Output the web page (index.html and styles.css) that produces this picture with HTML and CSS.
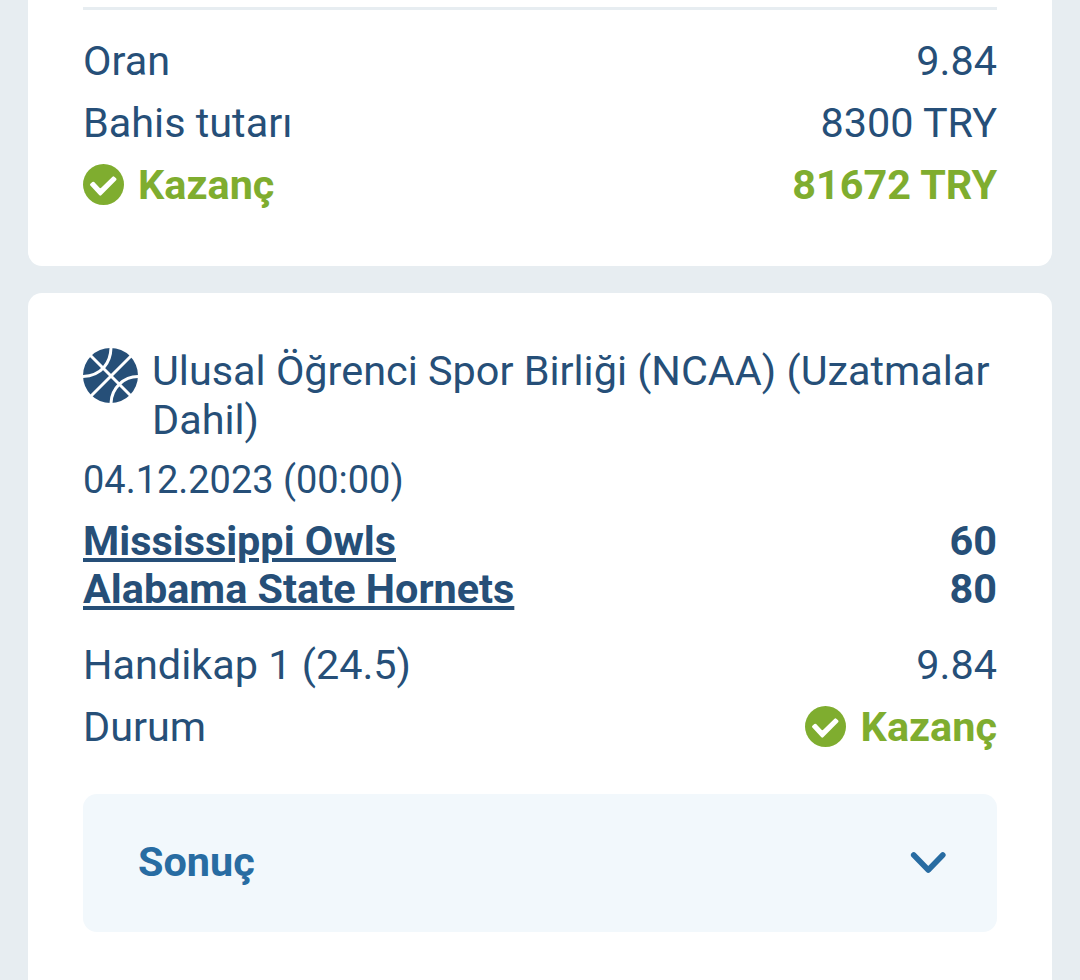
FILE: index.html
```html
<!DOCTYPE html>
<html lang="tr">
<head>
<meta charset="utf-8">
<title>Kupon</title>
<link rel="stylesheet" href="styles.css">
</head>
<body>
<section class="card summary">
  <div class="row"><span>Oran</span><span>9.84</span></div>
  <div class="row"><span>Bahis tutarı</span><span>8300 TRY</span></div>
  <div class="row win">
    <span class="status"><svg class="check" viewBox="0 0 41 41"><circle cx="20.5" cy="20.5" r="20.5"/><path d="M8.3 20.7l1.9-1.7 7.1 7.4L30.4 13.6l1.8 1.7L17.3 30.3z"/></svg>Kazanç</span>
    <span>81672 TRY</span>
  </div>
</section>
<section class="card event">
  <div class="league">
    <svg class="ball" viewBox="0 0 55 55"><circle cx="27.5" cy="27.5" r="27.5"/><path d="M7 7L49 49M49 7L7 49M28 -1C28 14 19 28 -1 28.5M56 28.5C41 28 28 40 28 56"/></svg>
    <span>Ulusal Öğrenci Spor Birliği (NCAA) (Uzatmalar Dahil)</span>
  </div>
  <div class="date">04.12.2023 (00:00)</div>
  <div class="team first"><a>Mississippi Owls</a><span>60</span></div>
  <div class="team"><a>Alabama State Hornets</a><span>80</span></div>
  <div class="row market"><span>Handikap 1 (24.5)</span><span>9.84</span></div>
  <div class="row"><span>Durum</span>
    <span class="status outcome win"><svg class="check" viewBox="0 0 41 41"><circle cx="20.5" cy="20.5" r="20.5"/><path d="M8.3 20.7l1.9-1.7 7.1 7.4L30.4 13.6l1.8 1.7L17.3 30.3z"/></svg>Kazanç</span>
  </div>
  <div class="result"><span>Sonuç</span><svg class="chevron" viewBox="0 0 36 24"><path d="M3.7 4l14.6 15L32.8 4"/></svg></div>
</section>
</body>
</html>
```
FILE: styles.css
```css
* { box-sizing: border-box; }
body {
  margin: 0;
  height: 980px;
  overflow: hidden;
  padding: 0 28px;
  background: #e7edf1;
  color: #264f78;
  font: 400 41.38px/48px Roboto, sans-serif;
}
.card { background: #fff; padding: 0 55px; }
.summary { height: 266px; padding-top: 7px; border-radius: 0 0 14px 14px; }
.summary::before { content: ""; display: block; height: 3px; margin-bottom: 20px; background: #e7edf1; }
.event { height: 720px; margin-top: 27px; padding-top: 54px; border-radius: 14px 14px 0 0; }
.row { display: flex; justify-content: space-between; height: 62px; padding-top: 7px; }
.win { color: #7fad2f; font-weight: 700; }
.status { display: flex; height: 48px; }
.check { width: 41px; height: 41px; margin: 3px 14px 0 0; fill: #7fad2f; }
.check path { fill: #fff; stroke: #fff; stroke-width: 2.6; stroke-linejoin: round; }
.outcome .check { margin-right: 15px; }
.league { display: flex; gap: 14px; line-height: 48.5px; }
.ball { flex: none; width: 55px; height: 55px; margin-top: 1px; fill: #264f78; }
.ball path { fill: none; stroke: #fff; stroke-width: 3; }
.date { margin-top: 12px; font-size: 37.95px; }
.team { display: flex; justify-content: space-between; font-weight: 700; }
.first { margin-top: 13px; }
.team a { text-decoration: underline; text-decoration-thickness: 4px; text-underline-offset: 3px; }
.market { margin-top: 21px; }
.result {
  display: flex; align-items: center; justify-content: space-between;
  height: 138px; margin-top: 36px; padding: 0 51px 0 55px;
  border-radius: 14px; background: #f2f8fc; color: #286ca2; font-weight: 700;
}
.result span { margin-bottom: 2px; }
.chevron { width: 36px; height: 24px; fill: none; stroke: #286ca2; stroke-width: 5.6; stroke-linecap: round; stroke-linejoin: round; }
```
